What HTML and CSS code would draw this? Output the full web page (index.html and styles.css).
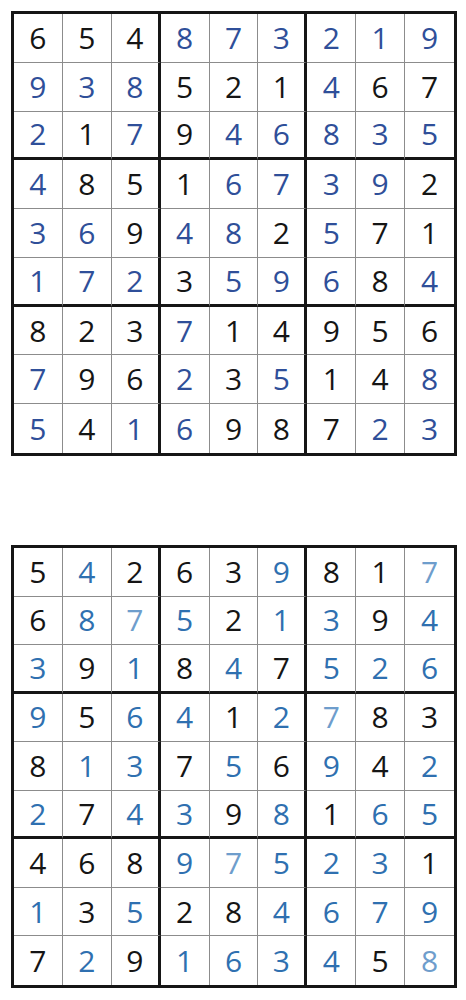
FILE: index.html
```html
<!DOCTYPE html>
<html lang="en">
  <head>
    <meta charset="UTF-8" />
    <meta name="viewport" content="width=device-width, initial-scale=1.0" />
    <title>sudoku</title>
    <link rel="stylesheet" href="styles.css">
  </head>
  <body>
    <div class="page">
      <div class="board first" id="board1"></div>
      <div class="board second" id="board2"></div>
    </div>
    <script>
      // k = given digit, b = filled in, l = filled in (lighter)
      const boards = [
        {
          id: "board1",
          digits: [
            "654873219", "938521467", "217946835",
            "485167392", "369482571", "172359684",
            "823714956", "796235148", "541698723"
          ],
          marks: [
            "kkkbbbbbb", "bbbkkkbkk", "bkbkbbbbb",
            "bkkkbbbbk", "bbkbbkbkk", "bbbkbbbkb",
            "kkkbkkkkk", "bkkbkbkkb", "bkbbkkkbb"
          ]
        },
        {
          id: "board2",
          digits: [
            "542639817", "687521394", "391847526",
            "956412783", "813756942", "274398165",
            "468975231", "135284679", "729163458"
          ],
          marks: [
            "kbkkkbkkl", "kblbkbbkb", "bkbkbkbbb",
            "bkbbkblkk", "kbbkbkbkb", "bkbbkbkbb",
            "kkkblbbbk", "bkbkkbbbb", "kbkbbbbkl"
          ]
        }
      ];

      boards.forEach((board) => {
        const el = document.getElementById(board.id);
        let html = "";
        for (let r = 0; r < 9; r++) {
          for (let c = 0; c < 9; c++) {
            html += `<div class="cell ${board.marks[r][c]}">${board.digits[r][c]}</div>`;
          }
        }
        el.innerHTML = html;
      });
    </script>
  </body>
</html>
```

FILE: styles.css
```css
body {
  margin: 0;
  background: #fff;
  font-family: "Open Sans", "Noto Sans", sans-serif;
}
.page {
  padding: 11px 0 0 11px;
  display: flex;
  flex-direction: column;
  gap: 89px;
}
.board {
  width: 446px;
  height: 445px;
  box-sizing: border-box;
  border: 3px solid #161616;
  display: grid;
  grid-template-columns: repeat(9, 1fr);
  grid-template-rows: repeat(9, 1fr);
}
.board.second {
  height: 443px;
}
.cell {
  display: flex;
  align-items: center;
  justify-content: center;
  font-size: 30px;
  line-height: 1;
  color: #151515;
  border-right: 1px solid #8c8c8c;
  border-bottom: 1px solid #8c8c8c;
}
.cell:nth-child(9n + 3),
.cell:nth-child(9n + 6) {
  border-right: 3px solid #161616;
}
.cell:nth-child(9n) {
  border-right: none;
}
.cell:nth-child(n + 19):nth-child(-n + 27),
.cell:nth-child(n + 46):nth-child(-n + 54) {
  border-bottom: 3px solid #161616;
}
.cell:nth-child(n + 73) {
  border-bottom: none;
}
.first .b {
  color: #2f4f99;
}
.second .b {
  color: #2f70b0;
}
.second .l {
  color: #6e9dcc;
}
```
